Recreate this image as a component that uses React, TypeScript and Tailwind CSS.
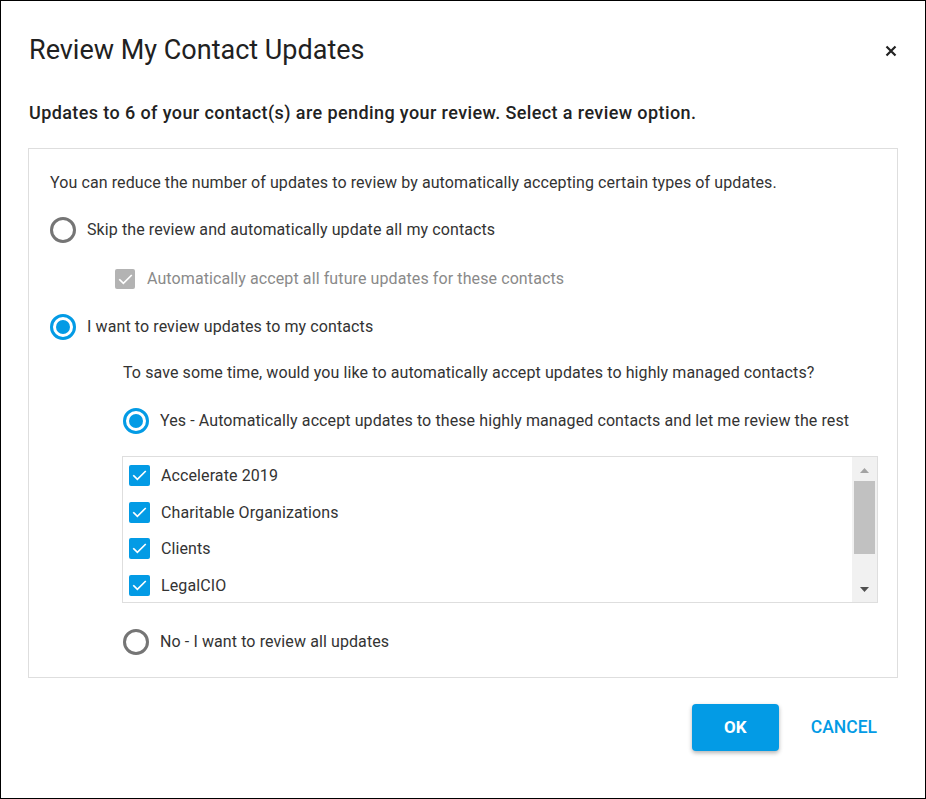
import React from 'react';

const BLUE = 'bg-[#039be5]';

function Radio({ checked }: { checked?: boolean }) {
  return (
    <span
      className={
        'flex h-[26px] w-[26px] shrink-0 items-center justify-center rounded-full border-[3px] ' +
        (checked ? 'border-[#039be5]' : 'border-[#757575]')
      }
    >
      {checked && <span className={'h-[14px] w-[14px] rounded-full ' + BLUE} />}
    </span>
  );
}

function Check({ disabled }: { disabled?: boolean }) {
  return (
    <span
      className={
        'flex shrink-0 items-center justify-center rounded-[2px] ' +
        (disabled ? 'h-[20px] w-[20px] bg-[#b3b3b3]' : 'h-[21px] w-[21px] ' + BLUE)
      }
    >
      <svg width="17" height="17" viewBox="0 0 24 24" fill="none">
        <path d="M4 12.5l5 5L20 6.5" stroke="white" strokeWidth="2.4" strokeLinecap="square" />
      </svg>
    </span>
  );
}

const groups = ['Accelerate 2019', 'Charitable Organizations', 'Clients', 'LegalCIO'];

export default function App() {
  return (
    <div className="h-[799px] w-[926px] border border-black bg-white font-['Roboto',sans-serif] text-[#333]">
      <div className="flex items-center justify-between pl-[28px] pr-[28px] pt-[35px]">
        <h1 className="text-[27px] leading-[28px] text-[#212121]">Review My Contact Updates</h1>
        <svg width="12" height="12" viewBox="0 0 12 12" className="mt-[2px]">
          <path d="M1.5 1.5l9 9M10.5 1.5l-9 9" stroke="#222" strokeWidth="2.2" />
        </svg>
      </div>

      <p className="mt-[37px] pl-[28px] text-[18px] font-medium leading-[24px] tracking-[0.4px] text-[#222]">
        Updates to 6 of your contact(s) are pending your review. Select a review option.
      </p>

      <div className="mx-[27px] mt-[23px] border border-[#dedede] pb-[22px] pl-[21px] pr-[20px] pt-[24px] text-[16px] leading-[20px] tracking-[0.1px]">
        <p>You can reduce the number of updates to review by automatically accepting certain types of updates.</p>

        <label className="mt-[24px] flex items-center gap-[11px]">
          <Radio />
          <span>Skip the review and automatically update all my contacts</span>
        </label>

        <label className="ml-[65px] mt-[26px] flex items-center gap-[12px] text-[#8a8a8a]">
          <Check disabled />
          <span>Automatically accept all future updates for these contacts</span>
        </label>

        <label className="mt-[25px] flex items-center gap-[11px]">
          <Radio checked />
          <span>I want to review updates to my contacts</span>
        </label>

        <div className="ml-[73px]">
          <p className="mt-[23px]">To save some time, would you like to automatically accept updates to highly managed contacts?</p>

          <label className="mt-[25px] flex items-center gap-[11px]">
            <Radio checked />
            <span>Yes - Automatically accept updates to these highly managed contacts and let me review the rest</span>
          </label>

          <div className="mt-[22px] flex h-[147px] w-[756px] -translate-x-px border border-[#dedede]">
            <ul className="flex-1 pl-[6px] pt-[8px]">
              {groups.map((g) => (
                <li key={g} className="mb-[15.7px] flex items-center gap-[11px] leading-[21px]">
                  <Check />
                  <span>{g}</span>
                </li>
              ))}
            </ul>
            <div className="flex w-[25px] flex-col items-center bg-[#f1f1f1]">
              <svg width="9" height="5" viewBox="0 0 9 5" className="mt-[11px]">
                <path d="M0 5L4.5 0L9 5z" fill="#a3a3a3" />
              </svg>
              <div className="mt-[8px] h-[73px] w-[21px] bg-[#c1c1c1]" />
              <svg width="9" height="5" viewBox="0 0 9 5" className="mt-auto mb-[10px]">
                <path d="M0 0L9 0L4.5 5z" fill="#505050" />
              </svg>
            </div>
          </div>

          <label className="mt-[26px] flex items-center gap-[11px]">
            <Radio />
            <span>No - I want to review all updates</span>
          </label>
        </div>
      </div>

      <div className="mt-[26px] flex items-center justify-end gap-[32px] pr-[48px]">
        <button className={'h-[47px] w-[87px] rounded-[4px] text-[17px] font-bold text-white shadow-[0_2px_4px_rgba(0,0,0,0.3)] ' + BLUE}>
          OK
        </button>
        <button className="text-[17.5px] font-medium text-[#039be5]">CANCEL</button>
      </div>
    </div>
  );
}
